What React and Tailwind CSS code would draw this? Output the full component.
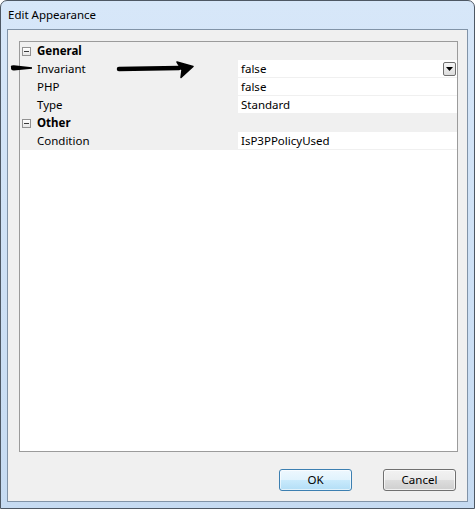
import React from "react";

const font = { fontFamily: '"Segoe UI", "Noto Sans", sans-serif' };

function Expander() {
  return (
    <div className="w-[9px] h-[9px] border border-[#919191] bg-[linear-gradient(to_bottom,#ffffff,#e6e6e6)] flex items-center justify-center">
      <div className="w-[5px] h-px bg-[#3a3a3a]" />
    </div>
  );
}

function Category({ label }) {
  return (
    <div className="h-[18px] flex items-center bg-[#f0f0f0]">
      <div className="w-[17px] pl-[2px] flex items-center">
        <Expander />
      </div>
      <span className="font-bold text-[11.5px] text-black leading-none">{label}</span>
    </div>
  );
}

function Row({ name, value, dropdown }) {
  return (
    <div className="h-[18px] flex bg-[#f0f0f0]">
      <div className="w-[218px] pl-[17px] h-[17px] flex items-center text-[11.5px] text-black">
        {name}
      </div>
      <div className="flex-1 h-[17px] bg-white flex items-center pl-[3px] pr-[1px] text-[11.5px] text-black">
        <span className="flex-1">{value}</span>
        {dropdown && (
          <div className="w-[13px] h-[14px] rounded-[2px] border border-[#6f6f6f] bg-[linear-gradient(to_bottom,#f6f6f6,#dcdcdc)] flex items-center justify-center">
            <svg width="7" height="4" viewBox="0 0 7 4">
              <path d="M0 0 L7 0 L3.5 4 Z" fill="#000" />
            </svg>
          </div>
        )}
      </div>
    </div>
  );
}

export default function App() {
  return (
    <div
      className="relative w-[475px] h-[509px] border border-[#4e5864] rounded-t-[7px] bg-[linear-gradient(to_bottom,#d7e7f9,#c6dbf2)] flex flex-col px-[6px] pb-[6px]"
      style={font}
    >
      <div className="h-[28px] flex items-center pl-[1px] text-[11.5px] text-black">
        Edit Appearance
      </div>
      <div className="flex-1 border border-[#8193a7] bg-[#f0f0f0] flex flex-col pt-[11px] pl-[11px] pr-[9px] pb-[10px]">
        <div className="h-[411px] border border-[#9b9b9b] bg-white flex flex-col">
          <Category label="General" />
          <Row name="Invariant" value="false" dropdown />
          <Row name="PHP" value="false" />
          <Row name="Type" value="Standard" />
          <Category label="Other" />
          <Row name="Condition" value="IsP3PPolicyUsed" />
        </div>
        <div className="mt-[17px] h-[22px] flex justify-end gap-[31px] mr-[2px]">
          <button className="w-[73px] h-[22px] rounded-[3px] border border-[#3c7fb1] bg-[linear-gradient(to_bottom,#eef8fe_0%,#e0f3fd_50%,#c9eafc_51%,#b3def6_100%)] text-[11.5px] text-black shadow-[inset_0_0_0_1px_rgba(255,255,255,0.6)]">
            OK
          </button>
          <button className="w-[73px] h-[22px] rounded-[3px] border border-[#707070] bg-[linear-gradient(to_bottom,#f2f2f2_0%,#ebebeb_50%,#dddddd_51%,#cfcfcf_100%)] text-[11.5px] text-black shadow-[inset_0_0_0_1px_rgba(255,255,255,0.7)]">
            Cancel
          </button>
        </div>
      </div>
      <svg
        className="absolute left-[-1px] top-[-1px] pointer-events-none"
        width="475"
        height="509"
        viewBox="0 0 475 509"
      >
        <path d="M11 67 Q10 65 14 65.3 L32 67.2 L32 68.8 L14 70.5 Q10.5 70.6 11 67 Z" fill="#000" />
        <path d="M119 69 L179 68" stroke="#000" strokeWidth="4.5" strokeLinecap="round" />
        <path d="M177 62 L193 66.5 L181 77.5 L182 70 Z" fill="#000" stroke="#000" strokeWidth="1.5" strokeLinejoin="round" />
      </svg>
    </div>
  );
}
